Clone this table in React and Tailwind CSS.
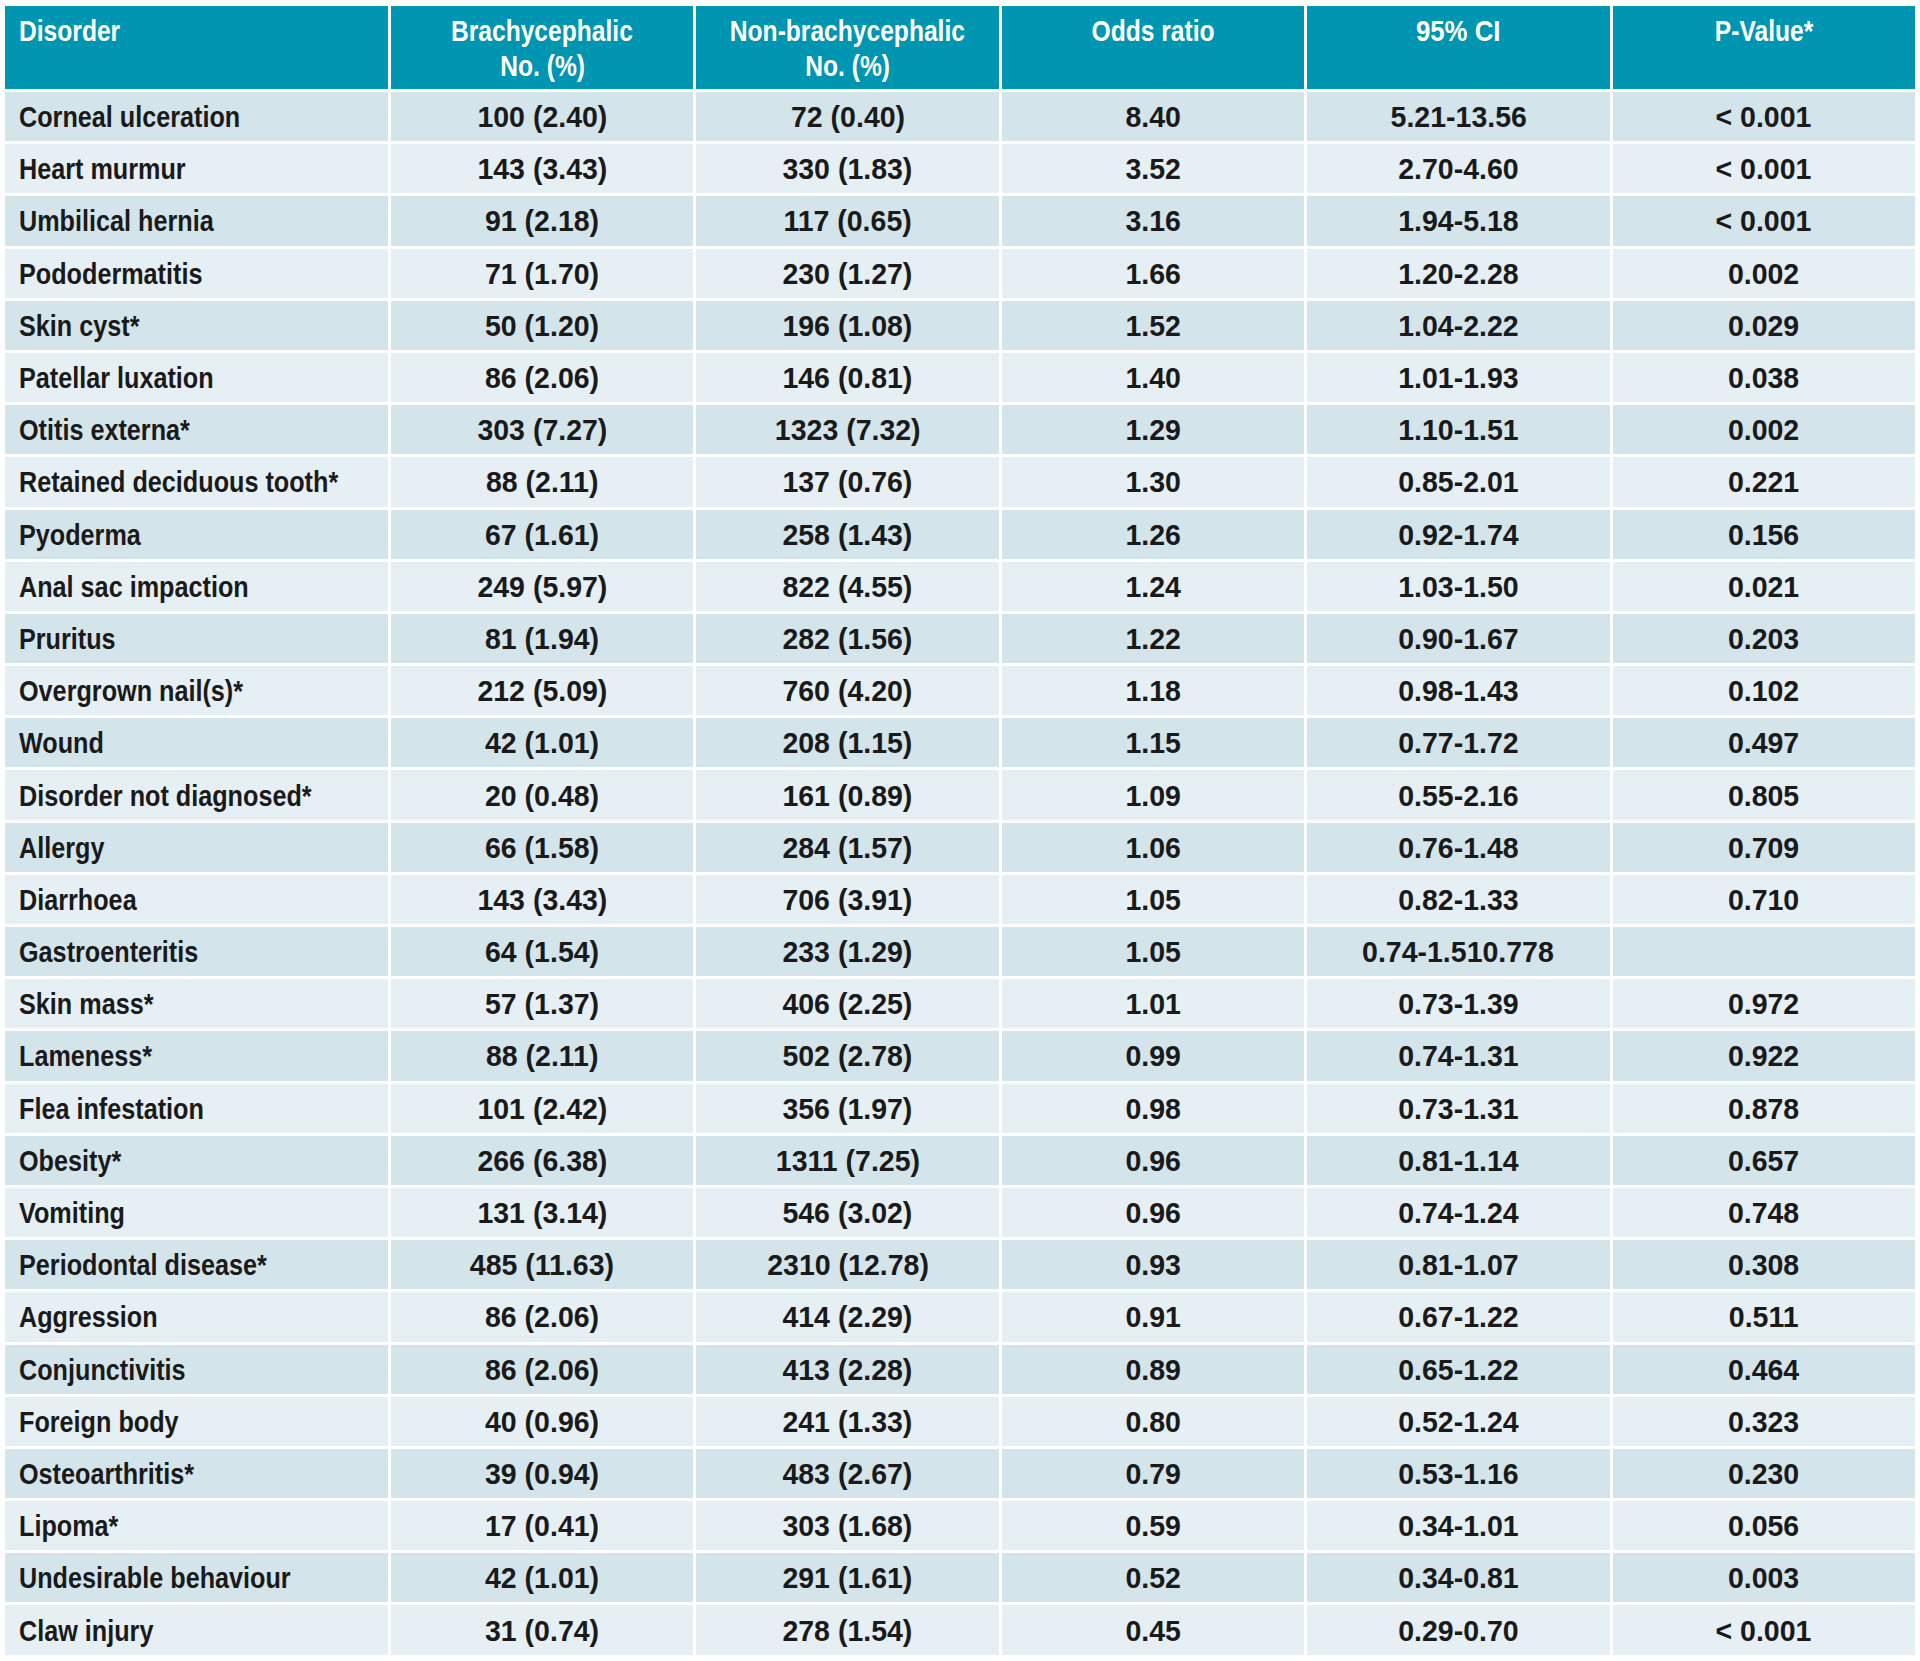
import React from "react";

const rows = [
  ["Corneal ulceration", "100 (2.40)", "72 (0.40)", "8.40", "5.21-13.56", "< 0.001"],
  ["Heart murmur", "143 (3.43)", "330 (1.83)", "3.52", "2.70-4.60", "< 0.001"],
  ["Umbilical hernia", "91 (2.18)", "117 (0.65)", "3.16", "1.94-5.18", "< 0.001"],
  ["Pododermatitis", "71 (1.70)", "230 (1.27)", "1.66", "1.20-2.28", "0.002"],
  ["Skin cyst*", "50 (1.20)", "196 (1.08)", "1.52", "1.04-2.22", "0.029"],
  ["Patellar luxation", "86 (2.06)", "146 (0.81)", "1.40", "1.01-1.93", "0.038"],
  ["Otitis externa*", "303 (7.27)", "1323 (7.32)", "1.29", "1.10-1.51", "0.002"],
  ["Retained deciduous tooth*", "88 (2.11)", "137 (0.76)", "1.30", "0.85-2.01", "0.221"],
  ["Pyoderma", "67 (1.61)", "258 (1.43)", "1.26", "0.92-1.74", "0.156"],
  ["Anal sac impaction", "249 (5.97)", "822 (4.55)", "1.24", "1.03-1.50", "0.021"],
  ["Pruritus", "81 (1.94)", "282 (1.56)", "1.22", "0.90-1.67", "0.203"],
  ["Overgrown nail(s)*", "212 (5.09)", "760 (4.20)", "1.18", "0.98-1.43", "0.102"],
  ["Wound", "42 (1.01)", "208 (1.15)", "1.15", "0.77-1.72", "0.497"],
  ["Disorder not diagnosed*", "20 (0.48)", "161 (0.89)", "1.09", "0.55-2.16", "0.805"],
  ["Allergy", "66 (1.58)", "284 (1.57)", "1.06", "0.76-1.48", "0.709"],
  ["Diarrhoea", "143 (3.43)", "706 (3.91)", "1.05", "0.82-1.33", "0.710"],
  ["Gastroenteritis", "64 (1.54)", "233 (1.29)", "1.05", "0.74-1.510.778", ""],
  ["Skin mass*", "57 (1.37)", "406 (2.25)", "1.01", "0.73-1.39", "0.972"],
  ["Lameness*", "88 (2.11)", "502 (2.78)", "0.99", "0.74-1.31", "0.922"],
  ["Flea infestation", "101 (2.42)", "356 (1.97)", "0.98", "0.73-1.31", "0.878"],
  ["Obesity*", "266 (6.38)", "1311 (7.25)", "0.96", "0.81-1.14", "0.657"],
  ["Vomiting", "131 (3.14)", "546 (3.02)", "0.96", "0.74-1.24", "0.748"],
  ["Periodontal disease*", "485 (11.63)", "2310 (12.78)", "0.93", "0.81-1.07", "0.308"],
  ["Aggression", "86 (2.06)", "414 (2.29)", "0.91", "0.67-1.22", "0.511"],
  ["Conjunctivitis", "86 (2.06)", "413 (2.28)", "0.89", "0.65-1.22", "0.464"],
  ["Foreign body", "40 (0.96)", "241 (1.33)", "0.80", "0.52-1.24", "0.323"],
  ["Osteoarthritis*", "39 (0.94)", "483 (2.67)", "0.79", "0.53-1.16", "0.230"],
  ["Lipoma*", "17 (0.41)", "303 (1.68)", "0.59", "0.34-1.01", "0.056"],
  ["Undesirable behaviour", "42 (1.01)", "291 (1.61)", "0.52", "0.34-0.81", "0.003"],
  ["Claw injury", "31 (0.74)", "278 (1.54)", "0.45", "0.29-0.70", "< 0.001"],
];

const font = { fontFamily: '"Liberation Sans", Arial, sans-serif' };

// the reference is set in a narrow bold face, squeeze Liberation Sans to match
const Narrow = ({ children, className }) => (
  <span className={"inline-block whitespace-nowrap " + className}>{children}</span>
);

export default function App() {
  return (
    <div className="bg-white pt-[3px] pb-[2px] px-[2px]" style={font}>
      <table className="w-full border-separate border-spacing-[3px] table-fixed">
        <colgroup>
          <col className="w-[383px]" />
          <col />
          <col />
          <col />
          <col />
          <col />
        </colgroup>
        <thead>
          <tr className="h-[83px] bg-[#0095b0] text-white text-[30px] font-bold leading-[35px]">
            <th className="align-top text-left pl-[14px] pt-[7px] font-bold">
              <Narrow className="scale-x-[0.82] origin-left">Disorder</Narrow>
            </th>
            <th className="align-top text-center pt-[7px] font-bold">
              <Narrow className="scale-x-[0.82]">Brachycephalic</Narrow>
              <br />
              <Narrow className="scale-x-[0.82]">No. (%)</Narrow>
            </th>
            <th className="align-top text-center pt-[7px] font-bold">
              <Narrow className="scale-x-[0.82]">Non-brachycephalic</Narrow>
              <br />
              <Narrow className="scale-x-[0.82]">No. (%)</Narrow>
            </th>
            <th className="align-top text-center pt-[7px] font-bold">
              <Narrow className="scale-x-[0.82]">Odds ratio</Narrow>
            </th>
            <th className="align-top text-center pt-[7px] font-bold">
              <Narrow className="scale-x-[0.86]">95% CI</Narrow>
            </th>
            <th className="align-top text-center pt-[7px] font-bold">
              <Narrow className="scale-x-[0.82]">P-Value*</Narrow>
            </th>
          </tr>
        </thead>
        <tbody>
          {rows.map((r, i) => (
            <tr
              key={r[0]}
              className={
                "h-[49.2px] text-[30px] font-bold text-[#1a1a1a] " +
                (i % 2 === 0 ? "bg-[#d3e5eb]" : "bg-[#e6eff4]")
              }
            >
              <td className="text-left pl-[14px] align-middle">
                <Narrow className="scale-x-[0.84] origin-left">{r[0]}</Narrow>
              </td>
              {r.slice(1).map((c, j) => (
                <td key={j} className="text-center align-middle">
                  <Narrow className="scale-x-[0.95]">{c}</Narrow>
                </td>
              ))}
            </tr>
          ))}
        </tbody>
      </table>
    </div>
  );
}
